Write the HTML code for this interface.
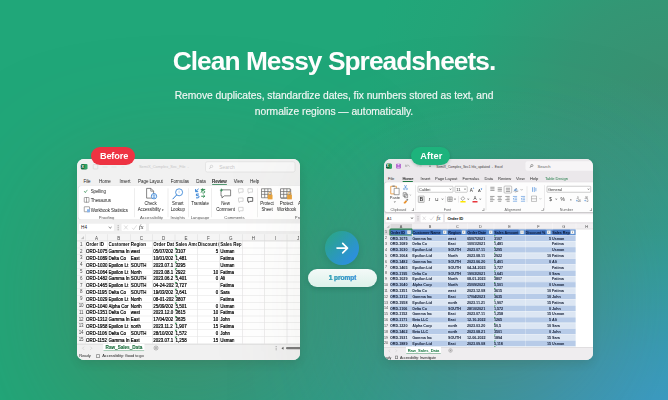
<!DOCTYPE html>
<html><head><meta charset="utf-8"><title>Clean Messy Spreadsheets</title>
<style>
html,body{margin:0;padding:0;}
body{width:668px;height:400px;overflow:hidden;font-family:"Liberation Sans",sans-serif;background:#20a779;}
#stage{position:relative;width:668px;height:400px;overflow:hidden;
  background:
    radial-gradient(ellipse 560px 340px at 100% 104%, rgba(58,156,200,1) 0%, rgba(58,155,194,.86) 20%, rgba(57,152,170,.45) 55%, rgba(54,148,120,0) 100%),
    radial-gradient(ellipse 300px 260px at 100% 22%, rgba(58,144,114,1) 0%, rgba(56,146,115,.8) 35%, rgba(45,156,118,.35) 70%, rgba(32,167,121,0) 100%),
    #20a779;
}
#stage *{box-sizing:border-box;}
h1{will-change:transform;position:absolute;left:0;top:44.9px;width:668px;margin:0;text-align:center;color:#fff;font-weight:700;font-size:26.3px;line-height:32px;letter-spacing:-0.95px;white-space:nowrap;}
.sub{will-change:transform;position:absolute;left:0;width:668px;text-align:center;color:#fff;-webkit-text-stroke:.18px rgba(255,255,255,.85);font-size:10.3px;line-height:16px;letter-spacing:-0.035px;white-space:nowrap;opacity:.97}
.card{position:absolute;background:#fff;border-radius:7px;overflow:hidden;box-shadow:0 40px 140px 10px rgba(110,105,85,.4),0 4px 10px rgba(40,80,60,.2);}
#before{left:76.5px;top:159.3px;width:223.5px;height:200.6px;}
#after{left:383.6px;top:159.3px;width:209.3px;height:200.6px;}
.badge{will-change:transform;position:absolute;height:18px;border-radius:9px;color:#fff;font-weight:700;font-size:9.2px;line-height:18px;text-align:center;letter-spacing:-0.15px;}
#bb{left:91.2px;top:147px;width:44px;background:#ee3342;padding-left:2px;}
#ab{left:411.4px;top:147px;width:38.6px;background:#1db37c;padding-left:2.2px;letter-spacing:.18px;box-shadow:0 1px 3px rgba(0,60,40,.25);}
#arrow{position:absolute;left:325.3px;top:231px;width:34px;height:34px;border-radius:50%;background:linear-gradient(135deg,#2aa58a 10%,#2c8fe0 85%);box-shadow:0 2px 6px rgba(0,50,60,.16);}
#pill{will-change:transform;position:absolute;left:308px;top:269px;width:69px;height:18.2px;border-radius:9.1px;background:linear-gradient(180deg,rgba(255,255,255,.95),rgba(230,245,240,.95));box-shadow:0 2px 5px rgba(0,50,40,.22);text-align:center;line-height:18px;font-size:6.5px;font-weight:700;letter-spacing:-0.02px;}
#pill span{-webkit-text-stroke:.22px #3096c2;background:linear-gradient(90deg,#27a0a6,#3a8ee0);-webkit-background-clip:text;background-clip:text;color:transparent;}
.sc{position:absolute;left:0;top:0;width:400%;height:400%;transform:scale(.25);transform-origin:0 0;}
/* excel common */
.card span,.card i{position:absolute;display:block;white-space:nowrap;font-style:normal;}
.grid{position:absolute;left:0;top:0;width:100%;height:100%;}
.vl{width:2px;background:#dcdcdc;}
.hl{left:0;width:100%;height:2px;background:#e2e2e2;}
.tri{width:0;height:0;border-top:8.4px solid #1e8e3e;border-right:8.4px solid transparent;}
/* before text */
#bgrid .c{transform:scaleX(.86);transform-origin:0 50%;font-size:20.8px;line-height:27.2px;height:27.2px;color:#000;font-weight:400;overflow:hidden;letter-spacing:0px;-webkit-text-stroke:0.88px #000;}
#bgrid .c.h{font-weight:700;-webkit-text-stroke:0;}
#bgrid .c.r{text-align:right;transform-origin:100% 50%;}
#bgrid .rn{left:0;width:32.8px;text-align:center;font-size:18px;line-height:27.2px;color:#4a4a4a;letter-spacing:-0.6px;}
#bgrid .ch{width:80px;text-align:center;font-size:18px;line-height:24px;color:#4a4a4a;}
/* after text */
#agrid .c{transform:scaleX(.93);transform-origin:0 50%;font-size:16px;line-height:23.36px;height:23.36px;color:#0d1830;font-weight:700;overflow:hidden;letter-spacing:-0.2px;}
#agrid .c.r{text-align:right;transform-origin:100% 50%;}
#agrid .c.h{color:#081633;font-weight:700;-webkit-text-stroke:0;}
#agrid .rn{left:-4px;width:24px;text-align:center;font-size:14.4px;line-height:23.36px;color:#444;}
#agrid .ch{width:80px;text-align:center;font-size:15.2px;line-height:21.6px;color:#444;}
#agrid .band{display:block;}
#agrid .fb{width:14px;height:14.4px;background:#fff;border:1.6px solid #9ab;}
#agrid .vl{background:rgba(255,255,255,.55);}
#agrid .hl{background:rgba(255,255,255,.55);}
.t{font-size:20px;line-height:24px;color:#222;}
.abs{position:absolute;width:0;height:0;}
.tb{font-size:18px;line-height:24px;color:#222;letter-spacing:-0.2px;}
.rb{font-size:17.84px;line-height:24px;color:#222;letter-spacing:-0.4px;}
.rb.c2{text-align:center;}
.rl{font-size:16.8px;line-height:24px;color:#555;text-align:center;}
.sep{top:754px;width:2px;height:116px;background:#dcdcdc;}
.ic{position:absolute;display:block;overflow:visible;}
.ta{top:700.8px;font-size:16.4px;line-height:24px;color:#2b2b2b;letter-spacing:-0.28px;}
.ra{font-size:16px;line-height:24px;color:#333;}
.la{font-size:14.8px;line-height:24px;color:#666;text-align:center;}
.sa{top:742.4px;width:2px;height:100px;background:#d8d6d8;}
.dl{top:834.4px;width:8.8px;height:8.8px;border-right:2px solid #666;border-bottom:2px solid #666;}
.cv{width:6px;height:6px;border-right:2px solid #555;border-bottom:2px solid #555;transform:rotate(45deg);}
#agrid .hp{display:inline;font-weight:700;background:rgba(40,78,160,.42);padding:2.4px 1.2px;}
#agrid .fa{left:3px;top:4.2px;width:0;height:0;border-top:4.4px solid #444;border-left:3.6px solid transparent;border-right:3.6px solid transparent;}
#agrid .tri{border-top-width:6.4px;border-right-width:6.4px;}

</style></head>
<body>
<div id="stage">
<h1>Clean Messy Spreadsheets.</h1>
<div class="sub" style="top:87.5px">Remove duplicates, standardize dates, fix numbers stored as text, and</div>
<div class="sub" style="top:103.9px">normalize regions — automatically.</div>
<div class="card" id="before"><div class="sc">
<div class="abs" style="left:-306px;top:-637.2px">
<!-- title bar + tab row background -->
<i style="left:306px;top:637.2px;width:896px;height:248px;background:#f1f1f1"></i>
<!-- excel icon -->
<i style="left:322.4px;top:656.8px;width:23.2px;height:22.4px;background:#1e7a45;border-radius:4px"></i>
<i style="left:333.6px;top:658.4px;width:14.4px;height:19.2px;background:#2fa566;border-radius:2.4px"></i>
<i style="left:321.2px;top:661.2px;width:15.2px;height:14.4px;background:#155f34;border-radius:2px"></i>
<span style="left:323.6px;top:660.4px;font-size:14.4px;line-height:16px;color:#fff;font-weight:700">X</span>
<!-- qat icons faint -->
<i style="left:370.4px;top:658.4px;width:20px;height:20px;border:2.4px solid #cfcfcf;border-radius:3.2px"></i>
<i style="left:408px;top:668px;width:20px;height:2.4px;background:#d6d6d6"></i>
<i style="left:444px;top:668px;width:20px;height:2.4px;background:#dcdcdc"></i>
<i style="left:484px;top:668px;width:12px;height:2.4px;background:#dcdcdc"></i>
<span style="left:554px;top:657.2px;font-size:16px;line-height:24px;color:#c6c6c6;letter-spacing:-0.2px">SemiX_Complex_Sec_File &nbsp;-</span>
<!-- search box -->
<i style="left:818.8px;top:646.8px;width:360px;height:43.2px;background:#f8f8f8;border:2.4px solid #d6d6d6;border-radius:8px"></i>
<i style="left:838.4px;top:660.8px;width:11.2px;height:11.2px;border:2px solid #bdbdbd;border-radius:50%"></i>
<i style="left:834px;top:672px;width:8px;height:2px;background:#bdbdbd;transform:rotate(-45deg)"></i>
<span style="left:875.2px;top:656.8px;font-size:19.6px;line-height:24px;color:#c8c8c8">Search</span>
<!-- tabs -->
<span class="tb" style="left:332px;top:713.2px">File</span>
<span class="tb" style="left:394px;top:713.2px">Home</span>
<span class="tb" style="left:476px;top:713.2px">Insert</span>
<span class="tb" style="left:550.4px;top:713.2px">Page Layout</span>
<span class="tb" style="left:680.8px;top:713.2px">Formulas</span>
<span class="tb" style="left:783.2px;top:713.2px">Data</span>
<span class="tb" style="left:846.4px;top:713.2px;font-weight:700;letter-spacing:-0.6px">Review</span>
<span class="tb" style="left:932.8px;top:713.2px">View</span>
<span class="tb" style="left:998.4px;top:713.2px">Help</span>
<i style="left:846.4px;top:736.8px;width:60px;height:3.6px;background:#1e7a45;border-radius:1.6px"></i>
<!-- ribbon body -->
<i style="left:312px;top:745.6px;width:904px;height:133.6px;background:#fff;border-radius:12px;box-shadow:0 2px 4px rgba(0,0,0,.12)"></i>
<!-- Proofing -->
<i style="left:337.2px;top:756.8px;width:8px;height:13.6px;border-right:2.8px solid #2b8a4e;border-bottom:2.8px solid #2b8a4e;transform:rotate(40deg)"></i>
<span class="rb" style="left:360.8px;top:754px">Spelling</span>
<i style="left:334.4px;top:790.4px;width:20.8px;height:20.8px;border:2.4px solid #555;border-radius:2px"></i>
<i style="left:344px;top:790.4px;width:2.4px;height:20.8px;background:#555"></i>
<span class="rb" style="left:360.8px;top:792px">Thesaurus</span>
<i style="left:334.4px;top:827.2px;width:22.4px;height:21.6px;border:2.4px solid #555;border-radius:2px"></i>
<i style="left:346.4px;top:838.4px;width:12px;height:12px;background:#8ab4e8"></i>
<span class="rb" style="left:360.8px;top:829.6px">Workbook Statistics</span>
<span class="rl" style="left:364px;width:120px;top:858.4px">Proofing</span>
<i class="sep" style="left:534.4px"></i>
<!-- Check accessibility -->
<svg class="ic" style="left:578px;top:751.2px" width="48" height="52" viewBox="0 0 12 13"><path d="M1.6 .9h4.3l2.7 2.7v7H1.6z" fill="#fff" stroke="#555" stroke-width=".7"/><path d="M5.8 .9v2.8h2.8" fill="none" stroke="#555" stroke-width=".6"/><circle cx="9" cy="8.7" r="2.7" fill="#fff" stroke="#2b7cd3" stroke-width=".8"/><circle cx="9" cy="7.3" r=".55" fill="#2b7cd3"/><path d="M7.5 8.3h3M9 8.3v1.2l-.9 1.3M9 9.5l.9 1.3" stroke="#2b7cd3" stroke-width=".6" fill="none"/></svg>
<span class="rb c2" style="left:536px;width:128px;top:801.2px">Check</span>
<span class="rb c2" style="left:536px;width:128px;top:825.2px">Accessibility <b style="font-size:12px">▾</b></span>
<span class="rl" style="left:540px;width:128px;top:858.4px">Accessibility</span>
<i class="sep" style="left:668.8px"></i>
<!-- Smart lookup -->
<svg class="ic" style="left:684px;top:751.2px" width="52" height="52" viewBox="0 0 13 13"><circle cx="7.6" cy="4.8" r="3.5" fill="#fff" stroke="#2b7cd3" stroke-width=".8"/><path d="M5 7.6L1.4 11.4" stroke="#2b7cd3" stroke-width="1" stroke-linecap="round"/><path d="M7.6 3.2v2.6" stroke="#9cc3ee" stroke-width=".7"/></svg>
<span class="rb c2" style="left:668px;width:82px;top:801.2px">Smart</span>
<span class="rb c2" style="left:668px;width:82px;top:825.2px">Lookup</span>
<span class="rl" style="left:668px;width:82px;top:858.4px">Insights</span>
<i class="sep" style="left:750.4px"></i>
<!-- Translate -->
<svg class="ic" style="left:777.6px;top:754.4px" width="44" height="41.6" viewBox="0 0 11 10.4"><g fill="none" stroke="#2b7cd3" stroke-width=".95"><path d="M.6 .8v2.6h2.6M.8 3.2L3.6 .6"/><path d="M3.9 5.8H1.4v1.6h1.7c1.2 0 1.2 2.2 0 2.2H1"/></g><g fill="none" stroke="#2b8a4e" stroke-width=".95"><path d="M5.8 1.2h4.4M7.6 .2c-.3 2.2-.6 3.2-1.6 4.2M6.4 2.6c1.8-.6 3.6 0 3.4 1.2-.2 1-1.400 1.200-2.400.800"/><path d="M6.200 8h3.600M8.400 6.600L9.800 8 8.400 9.400"/></g></svg>
<span class="rb c2" style="left:752px;width:92px;top:801.2px">Translate</span>
<span class="rl" style="left:752px;width:92px;top:858.4px">Language</span>
<i class="sep" style="left:843.2px"></i>
<!-- New comment -->
<svg class="ic" style="left:874.4px;top:754.4px" width="52" height="44" viewBox="0 0 13 11"><path d="M2 1.6h9.6v6H5.2L3 9.8V7.6H2z" fill="#fff" stroke="#555" stroke-width=".7"/><path d="M2.4 .4v3M.9 1.9h3" stroke="#2b8a4e" stroke-width=".8"/></svg>
<span class="rb c2" style="left:848px;width:104px;top:801.2px">New</span>
<span class="rb c2" style="left:848px;width:104px;top:825.2px">Comment</span>
<svg class="ic" style="left:948px;top:752px" width="72" height="104" viewBox="0 0 18 26"><g fill="#fff" stroke="#bdbdbd" stroke-width=".6"><path d="M1 1h4.6v3.4H3L1.8 5.6V4.4H1z"/><path d="M10.4 1H15v3.4h-2.6l-1.2 1.2V4.4h-.8z"/><path d="M1 10.2h4.6v3.4H3l-1.2 1.2v-1.2H1z"/><path d="M1 19.6h4.6V23H3l-1.2 1.2V23H1z"/></g><path d="M10.2 9.8h5v3.8h-2.8l-1.3 1.3v-1.3h-.9z" fill="#fff" stroke="#444" stroke-width=".8"/></svg>
<span class="rl" style="left:848px;width:176px;top:858.4px">Comments</span>
<i class="sep" style="left:1026.4px"></i>
<!-- Protect sheet / workbook -->
<svg class="ic" style="left:1040px;top:752px" width="52" height="52" viewBox="0 0 13 13"><path d="M1 1h9.6v9H1zM1 3.8h9.6M1 6.6h9.6M4.2 1v9M7.4 1v9" fill="#fff" stroke="#666" stroke-width=".7"/><rect x="7.2" y="7" width="4.8" height="4.6" fill="#e8a33d"/><path d="M8.2 7V5.8a1.4 1.4 0 012.8 0V7" fill="none" stroke="#e8a33d" stroke-width=".8"/></svg>
<svg class="ic" style="left:1116px;top:752px" width="56" height="52" viewBox="0 0 14 13"><path d="M1.6 1.6h9.6v9H1.6z" fill="#fff" stroke="#666" stroke-width=".7"/><path d="M1 1h9.6v9H1zM1 3.8h9.6M1 6.6h9.6M4.2 1v9M7.4 1v9" fill="#fff" stroke="#666" stroke-width=".7"/><rect x="7.6" y="7" width="4.8" height="4.6" fill="#e8a33d"/><path d="M8.6 7V5.8a1.4 1.4 0 012.8 0V7" fill="none" stroke="#e8a33d" stroke-width=".8"/></svg>
<span class="rb c2" style="left:1028px;width:76px;top:801.2px">Protect</span>
<span class="rb c2" style="left:1028px;width:76px;top:825.2px">Sheet</span>
<span class="rb c2" style="left:1096px;width:96px;top:801.2px">Protect</span>
<span class="rb c2" style="left:1096px;width:96px;top:825.2px">Workbook</span>
<span class="rb" style="left:1190.4px;top:801.2px">A</span>
<span class="rl" style="left:1144px;width:120px;top:858.4px">Protect</span>
<!-- formula bar -->
<i style="left:306px;top:879.6px;width:896px;height:85.6px;background:#efefef"></i>
<i style="left:314px;top:895.6px;width:140px;height:29.6px;background:#fff;border-radius:4px"></i>
<span class="t" style="left:322.4px;top:898.8px;font-size:18.4px">H4</span>
<i style="left:433.6px;top:903.2px;width:9.6px;height:9.6px;border-right:2.4px solid #555;border-bottom:2.4px solid #555;transform:rotate(45deg)"></i>
<i style="left:468.8px;top:902.4px;width:2.8px;height:3.6px;background:#777;box-shadow:0 8px 0 #777,0 16px 0 #777"></i>
<i style="left:484px;top:895.6px;width:98.4px;height:29.6px;background:#fff;border-radius:4px"></i>
<svg class="ic" style="left:488px;top:897.6px" width="96" height="28" viewBox="0 0 24 7"><path d="M1.6 1.4l3.6 4M5.2 1.4l-3.6 4M9.6 3.8l1.5 1.7 3.1-4.2" stroke="#c8c8c8" stroke-width=".6" fill="none"/><text x="16.6" y="5.4" font-family="Liberation Serif" font-style="italic" font-size="6" fill="#333">fx</text></svg>
<i style="left:594px;top:895.6px;width:640px;height:29.6px;background:#fff;border-radius:4px"></i>
<!-- column header strip -->
<i style="left:306px;top:937.2px;width:896px;height:27.6px;background:#f5f5f5;border-bottom:2px solid #d8d8d8"></i>
<i style="left:306px;top:964.8px;width:32.8px;height:440px;background:#f5f5f5"></i>
<i style="left:320.8px;top:945.6px;width:0;height:0;border-bottom:13.6px solid #c4c4c4;border-left:13.6px solid transparent"></i>
</div>
<div class="grid" id="bgrid">
<span class="ch" style="left:37.6px;top:303.6px">A</span><span class="ch" style="left:127.2px;top:303.6px">B</span><span class="ch" style="left:217px;top:303.6px">C</span><span class="ch" style="left:306.6px;top:303.6px">D</span><span class="ch" style="left:396px;top:303.6px">E</span><span class="ch" style="left:485.4px;top:303.6px">F</span><span class="ch" style="left:575px;top:303.6px">G</span><span class="ch" style="left:665px;top:303.6px">H</span><span class="ch" style="left:754.6px;top:303.6px">I</span><span class="ch" style="left:844px;top:303.6px">J</span><i class="vl" style="left:32.8px;top:300.8px;height:442px"></i><i class="vl" style="left:122.4px;top:300.8px;height:442px"></i><i class="vl" style="left:212px;top:300.8px;height:442px"></i><i class="vl" style="left:302px;top:300.8px;height:442px"></i><i class="vl" style="left:391.2px;top:300.8px;height:442px"></i><i class="vl" style="left:480.8px;top:300.8px;height:442px"></i><i class="vl" style="left:570px;top:300.8px;height:442px"></i><i class="vl" style="left:660px;top:300.8px;height:442px"></i><i class="vl" style="left:750px;top:300.8px;height:442px"></i><i class="vl" style="left:839.2px;top:300.8px;height:442px"></i><i class="vl" style="left:928.8px;top:300.8px;height:442px"></i><i class="hl" style="top:327.6px"></i><i class="hl" style="top:354.84px"></i><i class="hl" style="top:382.08px"></i><i class="hl" style="top:409.32px"></i><i class="hl" style="top:436.56px"></i><i class="hl" style="top:463.8px"></i><i class="hl" style="top:491.04px"></i><i class="hl" style="top:518.28px"></i><i class="hl" style="top:545.52px"></i><i class="hl" style="top:572.76px"></i><i class="hl" style="top:600px"></i><i class="hl" style="top:627.24px"></i><i class="hl" style="top:654.48px"></i><i class="hl" style="top:681.72px"></i><i class="hl" style="top:708.96px"></i><i class="hl" style="top:736.2px"></i><i class="hl" style="top:763.44px"></i><span class="rn" style="top:327.6px">1</span><span class="c h" style="left:36px;top:327.6px;width:99.52px;">Order ID</span><span class="c h" style="left:125.6px;top:327.6px;width:99.52px;">Customer</span><span class="c h" style="left:215.2px;top:327.6px;width:100px;">Region</span><span class="c h" style="left:305.2px;top:327.6px;width:99.08px;">Order Dat</span><span class="c h" style="left:394.4px;top:327.6px;width:99.52px;">Sales Amo</span><span class="c h" style="left:484px;top:327.6px;width:99.08px;">Discount (%</span><span class="c h" style="left:573.2px;top:327.6px;">Sales Rep</span><span class="rn" style="top:354.84px">2</span><span class="c" style="left:36px;top:354.84px;width:99.52px;">ORD-1075</span><span class="c" style="left:125.6px;top:354.84px;width:99.52px;">Gamma In</span><span class="c" style="left:215.2px;top:354.84px;">west</span><span class="c" style="left:305.2px;top:354.84px;width:99.08px;">05/07/202</span><i class="tri" style="left:393.2px;top:355.64px"></i><span class="c" style="left:394.4px;top:354.84px;width:99.52px;">3107</span><span class="c r" style="left:467.08px;width:98.12px;top:354.84px;">5</span><span class="c" style="left:573.2px;top:354.84px;">Usman</span><span class="rn" style="top:382.08px">3</span><span class="c" style="left:36px;top:382.08px;width:99.52px;">ORD-1089</span><span class="c" style="left:125.6px;top:382.08px;width:99.52px;">Delta Co</span><span class="c" style="left:215.2px;top:382.08px;">East</span><span class="c" style="left:305.2px;top:382.08px;width:99.08px;">10/01/202</span><i class="tri" style="left:393.2px;top:382.88px"></i><span class="c" style="left:394.4px;top:382.08px;width:99.52px;">1,481</span><span class="c" style="left:573.2px;top:382.08px;">Fatima</span><span class="rn" style="top:409.32px">4</span><span class="c" style="left:36px;top:409.32px;width:99.52px;">ORD-1030</span><span class="c" style="left:125.6px;top:409.32px;width:99.52px;">Epsilon Lt</span><span class="c" style="left:215.2px;top:409.32px;">SOUTH</span><span class="c" style="left:305.2px;top:409.32px;width:99.08px;">2023.07.1</span><i class="tri" style="left:393.2px;top:410.12px"></i><span class="c" style="left:394.4px;top:409.32px;width:99.52px;">3295</span><span class="c" style="left:573.2px;top:409.32px;">Usman</span><span class="rn" style="top:436.56px">5</span><span class="c" style="left:36px;top:436.56px;width:99.52px;">ORD-1064</span><span class="c" style="left:125.6px;top:436.56px;width:99.52px;">Epsilon Lt</span><span class="c" style="left:215.2px;top:436.56px;">North</span><span class="c" style="left:305.2px;top:436.56px;width:99.08px;">2023.08.1</span><i class="tri" style="left:393.2px;top:437.36px"></i><span class="c" style="left:394.4px;top:436.56px;width:99.52px;">2922</span><span class="c r" style="left:467.08px;width:98.12px;top:436.56px;">10</span><span class="c" style="left:573.2px;top:436.56px;">Fatima</span><span class="rn" style="top:463.8px">6</span><span class="c" style="left:36px;top:463.8px;width:99.52px;">ORD-1482</span><span class="c" style="left:125.6px;top:463.8px;width:99.52px;">Gamma In</span><span class="c" style="left:215.2px;top:463.8px;">SOUTH</span><span class="c" style="left:305.2px;top:463.8px;width:99.08px;">2023.06.2</span><i class="tri" style="left:393.2px;top:464.6px"></i><span class="c" style="left:394.4px;top:463.8px;width:99.52px;">5,401</span><span class="c r" style="left:467.08px;width:98.12px;top:463.8px;">0</span><span class="c" style="left:573.2px;top:463.8px;">Ali</span><span class="rn" style="top:491.04px">7</span><span class="c" style="left:36px;top:491.04px;width:99.52px;">ORD-1465</span><span class="c" style="left:125.6px;top:491.04px;width:99.52px;">Epsilon Lt</span><span class="c" style="left:215.2px;top:491.04px;">SOUTH</span><span class="c" style="left:305.2px;top:491.04px;width:99.08px;">04-24-202</span><i class="tri" style="left:393.2px;top:491.84px"></i><span class="c" style="left:394.4px;top:491.04px;width:99.52px;">3,727</span><span class="c" style="left:573.2px;top:491.04px;">Fatima</span><span class="rn" style="top:518.28px">8</span><span class="c" style="left:36px;top:518.28px;width:99.52px;">ORD-1195</span><span class="c" style="left:125.6px;top:518.28px;width:99.52px;">Delta Co</span><span class="c" style="left:215.2px;top:518.28px;">SOUTH</span><span class="c" style="left:305.2px;top:518.28px;width:99.08px;">19/03/202</span><i class="tri" style="left:393.2px;top:519.08px"></i><span class="c" style="left:394.4px;top:518.28px;width:99.52px;">3,641</span><span class="c r" style="left:467.08px;width:98.12px;top:518.28px;">0</span><span class="c" style="left:573.2px;top:518.28px;">Sara</span><span class="rn" style="top:545.52px">9</span><span class="c" style="left:36px;top:545.52px;width:99.52px;">ORD-1029</span><span class="c" style="left:125.6px;top:545.52px;width:99.52px;">Epsilon Lt</span><span class="c" style="left:215.2px;top:545.52px;">North</span><span class="c" style="left:305.2px;top:545.52px;width:99.08px;">08-01-202</span><i class="tri" style="left:393.2px;top:546.32px"></i><span class="c" style="left:394.4px;top:545.52px;width:99.52px;">3807</span><span class="c" style="left:573.2px;top:545.52px;">Fatima</span><span class="rn" style="top:572.76px">10</span><span class="c" style="left:36px;top:572.76px;width:99.52px;">ORD-1040</span><span class="c" style="left:125.6px;top:572.76px;width:99.52px;">Alpha Cor</span><span class="c" style="left:215.2px;top:572.76px;">North</span><span class="c" style="left:305.2px;top:572.76px;width:99.08px;">25/09/202</span><i class="tri" style="left:393.2px;top:573.56px"></i><span class="c" style="left:394.4px;top:572.76px;width:99.52px;">5,501</span><span class="c r" style="left:467.08px;width:98.12px;top:572.76px;">0</span><span class="c" style="left:573.2px;top:572.76px;">Usman</span><span class="rn" style="top:600px">11</span><span class="c" style="left:36px;top:600px;width:99.52px;">ORD-1351</span><span class="c" style="left:125.6px;top:600px;width:99.52px;">Delta Co</span><span class="c" style="left:215.2px;top:600px;">west</span><span class="c" style="left:305.2px;top:600px;width:99.08px;">2023.12.0</span><i class="tri" style="left:393.2px;top:600.8px"></i><span class="c" style="left:394.4px;top:600px;width:99.52px;">3615</span><span class="c r" style="left:467.08px;width:98.12px;top:600px;">10</span><span class="c" style="left:573.2px;top:600px;">Fatima</span><span class="rn" style="top:627.24px">12</span><span class="c" style="left:36px;top:627.24px;width:99.52px;">ORD-1312</span><span class="c" style="left:125.6px;top:627.24px;width:99.52px;">Gamma In</span><span class="c" style="left:215.2px;top:627.24px;">East</span><span class="c" style="left:305.2px;top:627.24px;width:99.08px;">17/04/202</span><i class="tri" style="left:393.2px;top:628.04px"></i><span class="c" style="left:394.4px;top:627.24px;width:99.52px;">3635</span><span class="c r" style="left:467.08px;width:98.12px;top:627.24px;">10</span><span class="c" style="left:573.2px;top:627.24px;">John</span><span class="rn" style="top:654.48px">13</span><span class="c" style="left:36px;top:654.48px;width:99.52px;">ORD-1958</span><span class="c" style="left:125.6px;top:654.48px;width:99.52px;">Epsilon Lt</span><span class="c" style="left:215.2px;top:654.48px;">north</span><span class="c" style="left:305.2px;top:654.48px;width:99.08px;">2023.11.2</span><i class="tri" style="left:393.2px;top:655.28px"></i><span class="c" style="left:394.4px;top:654.48px;width:99.52px;">1,907</span><span class="c r" style="left:467.08px;width:98.12px;top:654.48px;">15</span><span class="c" style="left:573.2px;top:654.48px;">Fatima</span><span class="rn" style="top:681.72px">14</span><span class="c" style="left:36px;top:681.72px;width:99.52px;">ORD-1106</span><span class="c" style="left:125.6px;top:681.72px;width:99.52px;">Delta Co</span><span class="c" style="left:215.2px;top:681.72px;">SOUTH</span><span class="c" style="left:305.2px;top:681.72px;width:99.08px;">28/10/202</span><i class="tri" style="left:393.2px;top:682.52px"></i><span class="c" style="left:394.4px;top:681.72px;width:99.52px;">1,572</span><span class="c r" style="left:467.08px;width:98.12px;top:681.72px;">0</span><span class="c" style="left:573.2px;top:681.72px;">John</span><span class="rn" style="top:708.96px">15</span><span class="c" style="left:36px;top:708.96px;width:99.52px;">ORD-1152</span><span class="c" style="left:125.6px;top:708.96px;width:99.52px;">Gamma In</span><span class="c" style="left:215.2px;top:708.96px;">East</span><span class="c" style="left:305.2px;top:708.96px;width:99.08px;">2023.07.1</span><i class="tri" style="left:393.2px;top:709.76px"></i><span class="c" style="left:394.4px;top:708.96px;width:99.52px;">1,258</span><span class="c r" style="left:467.08px;width:98.12px;top:708.96px;">15</span><span class="c" style="left:573.2px;top:708.96px;">Usman</span></div>
<div class="abs" style="left:-306px;top:-637.2px">
<i style="left:306px;top:1376.8px;width:896px;height:64px;background:#f1f1f1"></i>
<i style="left:306px;top:1376.8px;width:896px;height:2px;background:#d4d4d4"></i>
<svg class="ic" style="left:324px;top:1384.8px" width="48" height="17.6" viewBox="0 0 12 4.4"><path d="M2.6 .6L1 2.2l1.6 1.6M8.8 .6l1.6 1.6-1.6 1.6" stroke="#c9c9c9" stroke-width=".6" fill="none"/></svg>
<i style="left:410.8px;top:1377.6px;width:165.6px;height:28.8px;background:#fff;border-bottom:3.2px solid #1e7a45;border-radius:0 0 4px 4px"></i>
<span style="left:410.8px;width:165.6px;text-align:center;top:1380px;font-size:18.8px;line-height:24px;color:#176b3a;font-weight:700;letter-spacing:-0.2px;-webkit-text-stroke:0.32px #176b3a">Raw_Sales_Data</span>
<i style="left:613.2px;top:1384.4px;width:17.6px;height:17.6px;border:2px solid #777;border-radius:50%"></i>
<i style="left:617.6px;top:1392.2px;width:8.8px;height:2px;background:#777"></i>
<i style="left:621px;top:1388.8px;width:2px;height:8.8px;background:#777"></i>
<i style="left:1100.8px;top:1386.4px;width:2.8px;height:3.2px;background:#666;box-shadow:0 6.4px 0 #666,0 12.8px 0 #666"></i>
<i style="left:1124px;top:1388px;width:0;height:0;border-right:8px solid #555;border-top:6px solid transparent;border-bottom:6px solid transparent"></i>
<i style="left:1142.4px;top:1389.6px;width:80px;height:8.8px;background:#7a7a7a;border-radius:4.4px"></i>
<span style="left:315.2px;top:1413.6px;font-size:16px;line-height:24px;color:#222;letter-spacing:-0.12px">Ready</span>
<i style="left:383.2px;top:1418.4px;width:13.6px;height:14.4px;border:2px solid #555;border-radius:1.6px"></i>
<span style="left:407.2px;top:1413.6px;font-size:16px;line-height:24px;color:#222;letter-spacing:-0.4px">Accessibility: Good to go</span>
</div>
</div></div>
<div class="card" id="after"><div class="sc">
<div class="abs" style="left:-1534.4px;top:-637.2px">
<i style="left:1534.4px;top:637.2px;width:840px;height:281.6px;background:#ebe8eb"></i>
<!-- excel icon -->
<i style="left:1543.2px;top:655.6px;width:20.8px;height:20.8px;background:#1e7a45;border-radius:4px"></i>
<i style="left:1553.6px;top:657.2px;width:12.8px;height:17.6px;background:#2fa566;border-radius:2.4px"></i>
<i style="left:1542px;top:659.6px;width:14px;height:13.2px;background:#155f34;border-radius:2px"></i>
<span style="left:1544px;top:658.4px;font-size:13.2px;line-height:16px;color:#fff;font-weight:700">X</span>
<!-- save icon purple -->
<i style="left:1583.2px;top:656.4px;width:18.4px;height:19.2px;background:#a64ac9;border-radius:2.8px"></i>
<i style="left:1588px;top:656.4px;width:8.8px;height:6.4px;background:#e9d3f3"></i>
<i style="left:1587.2px;top:667.6px;width:10.4px;height:8px;background:#d9b2ea"></i>
<svg class="ic" style="left:1617.6px;top:657.6px" width="24" height="18.4" viewBox="0 0 6 4.6"><path d="M.8 2.2C2 .6 4.4.6 5 2.8M.8 .6v1.8h1.8" fill="none" stroke="#9a9a9a" stroke-width=".55"/></svg>
<svg class="ic" style="left:1662px;top:657.6px" width="24" height="18.4" viewBox="0 0 6 4.6"><path d="M5.2 2.2C4 .6 1.6.6 1 2.8M5.2 .6v1.8H3.4" fill="none" stroke="#d2d0d2" stroke-width=".55"/></svg>
<i style="left:1716px;top:663.6px;width:4.8px;height:4.8px;border-radius:50%;background:#333"></i>
<span style="left:1743.2px;top:654.4px;font-size:16.2px;line-height:24px;color:#3a3a3a;letter-spacing:-0.08px;transform:scaleX(.83);transform-origin:0 50%">SemiX_Complex_Sec1 hfo_updated &nbsp;-&nbsp; Excel</span>
<!-- search -->
<i style="left:2100.8px;top:646px;width:272px;height:38.4px;background:#f7f5f7;border-radius:8px 0 0 8px"></i>
<i style="left:2120.8px;top:658px;width:10.4px;height:10.4px;border:2px solid #555;border-radius:50%"></i>
<i style="left:2116.8px;top:668.4px;width:7.6px;height:2px;background:#555;transform:rotate(-45deg)"></i>
<span style="left:2148.8px;top:654px;font-size:16.4px;line-height:24px;color:#666">Search</span>
<!-- tabs -->
<span class="ta" style="left:1550.4px">File</span>
<span class="ta" style="left:1608px;font-weight:700;letter-spacing:-0.48px">Home</span>
<span class="ta" style="left:1680.8px">Insert</span>
<span class="ta" style="left:1738.4px">Page Layout</span>
<span class="ta" style="left:1848.8px">Formulas</span>
<span class="ta" style="left:1936.8px">Data</span>
<span class="ta" style="left:1990.4px">Review</span>
<span class="ta" style="left:2062.4px">View</span>
<span class="ta" style="left:2118.4px">Help</span>
<span class="ta" style="left:2178.4px;color:#1e7a45">Table Design</span>
<i style="left:1608px;top:725.6px;width:42.4px;height:3.2px;background:#1e7a45;border-radius:1.6px"></i>
<!-- ribbon body -->
<i style="left:1537.2px;top:730.4px;width:852px;height:118.4px;background:#fdfdfd;border-radius:10px;box-shadow:0 2px 4px rgba(0,0,0,.14)"></i>
<!-- clipboard -->
<svg class="ic" style="left:1557.6px;top:739.2px" width="42" height="44" viewBox="0 0 10.5 11"><path d="M1 1.8h5.6v7.6H1z" fill="#fff" stroke="#e8912d" stroke-width=".8"/><path d="M2.6 1h2.4v1.4H2.6z" fill="#888"/><path d="M4.4 3.8h5v6.4h-5z" fill="#fff" stroke="#666" stroke-width=".6"/></svg>
<span class="ra" style="left:1552px;width:52px;text-align:center;top:778.4px">Paste</span>
<i style="left:1574.4px;top:804px;width:6.4px;height:6.4px;border-right:2px solid #555;border-bottom:2px solid #555;transform:rotate(45deg)"></i>
<svg class="ic" style="left:1606.4px;top:739.2px" width="28" height="80" viewBox="0 0 7 20"><path d="M2.4 .6l1.6 3M4.6 .6L3 3.6" stroke="#3b83d6" stroke-width=".6"/><circle cx="2.2" cy="4.4" r=".8" fill="none" stroke="#3b83d6" stroke-width=".5"/><circle cx="4.8" cy="4.4" r=".8" fill="none" stroke="#3b83d6" stroke-width=".5"/><path d="M1.2 8.2h3v3.6h-3zM2.6 9.6h3v3.6h-3z" fill="#fff" stroke="#555" stroke-width=".55"/><path d="M1.4 18.4l2.4-2.6 1.4 1.2-2.2 2.2z" fill="#e8912d"/><path d="M4 15.6l1.4-1.4 1 1-1.4 1.4z" fill="#777"/></svg>
<i style="left:1637.6px;top:777.6px;width:5.2px;height:5.2px;border-right:1.8px solid #555;border-bottom:1.8px solid #555;transform:rotate(45deg)"></i>
<span class="la" style="left:1552px;width:80px;top:826.4px">Clipboard</span>
<i class="dl" style="left:1645.6px"></i>
<i class="sa" style="left:1660.8px"></i>
<!-- font -->
<i style="left:1669.6px;top:745.6px;width:141.6px;height:25.6px;background:#fff;border:2px solid #9a9a9a;border-radius:3.2px"></i>
<span class="ra" style="left:1674.4px;top:746.4px">Calibri</span>
<i class="cv" style="left:1797.6px;top:752.8px"></i>
<i style="left:1817.6px;top:745.6px;width:51.2px;height:25.6px;background:#fff;border:2px solid #9a9a9a;border-radius:3.2px"></i>
<span class="ra" style="left:1823.2px;top:746.4px">11</span>
<i class="cv" style="left:1855.2px;top:752.8px"></i>
<span class="ra" style="left:1877.6px;top:745.2px;font-size:18.4px">A<b style="font-size:10.4px;vertical-align:8px;color:#3b83d6">^</b></span>
<span class="ra" style="left:1910.4px;top:747.2px;font-size:16px">A<b style="font-size:10.4px;vertical-align:6.4px;color:#3b83d6">v</b></span>
<i style="left:1670.4px;top:784px;width:25.6px;height:28px;background:#e6e6e6;border:2px solid #8a8a8a;border-radius:3.2px"></i>
<span class="ra" style="left:1677.2px;top:785.6px;font-weight:700;font-size:18.4px">B</span>
<span class="ra" style="left:1712px;top:785.6px;font-style:italic;font-size:18.4px;font-family:'Liberation Serif',serif">I</span>
<span class="ra" style="left:1739.2px;top:785.6px;text-decoration:underline;font-size:17.6px">U</span>
<i class="cv" style="left:1765.6px;top:793.2px"></i>
<i class="sa" style="left:1780.8px;top:785.6px;height:25.6px"></i>
<svg class="ic" style="left:1787.2px;top:787.2px" width="21.6" height="21.6" viewBox="0 0 5.4 5.4"><path d="M.5 .5h4.4v4.4H.5zM2.7 .5v4.4M.5 2.7h4.4" fill="none" stroke="#555" stroke-width=".5"/></svg>
<i class="cv" style="left:1815.2px;top:793.2px"></i>
<i class="sa" style="left:1830.4px;top:785.6px;height:25.6px"></i>
<svg class="ic" style="left:1838.4px;top:784.8px" width="24" height="26.4" viewBox="0 0 6 6.6"><path d="M2.8 .6L.9 2.8l1.9 1.7 2-2.1z" fill="#fff" stroke="#555" stroke-width=".5"/><rect x=".4" y="5" width="5.2" height="1.5" fill="#ffe600"/></svg>
<i class="cv" style="left:1868px;top:793.2px"></i>
<span class="ra" style="left:1892px;top:783.6px;font-size:18.4px">A</span>
<i style="left:1888.8px;top:805.6px;width:19.2px;height:5.6px;background:#e8353b"></i>
<i class="cv" style="left:1916.8px;top:793.2px"></i>
<span class="la" style="left:1748px;width:80px;top:826.4px">Font</span>
<i class="dl" style="left:1926.4px"></i>
<i class="sa" style="left:1941.6px"></i>
<!-- alignment -->
<svg class="ic" style="left:1956px;top:746.4px" width="224" height="68" viewBox="0 0 56 17"><g stroke="#555" stroke-width=".55" fill="none"><path d="M.8 1h4.2M.8 2.6h4.2M.8 4.2h4.2"/><path d="M8.2 1.6h4.2M8.2 3.2h4.2M8.2 4.8h4.2"/><path d="M16.4 2h4.2M16.4 3.6h4.2M16.4 5.2h4.2"/><path d="M.6 10.2h4.4M.6 11.8h3M.6 13.4h4.4M.6 15h3"/><path d="M8 10.2h4.4M8.7 11.8h3M8 13.4h4.4M8.7 15h3"/><path d="M15.8 10.2h4.4M17.2 11.8h3M15.8 13.4h4.4M17.2 15h3"/></g><rect x="14.6" y="-.2" width="7.6" height="7" fill="none" stroke="#8a8a8a" stroke-width=".5" rx=".8"/><rect x="14.9" y=".1" width="7" height="6.4" fill="#e6e6e6" opacity=".0"/><path d="M24.4 5.4l3-3.6M25.4 5.8l3.4-1" stroke="#555" stroke-width=".5"/><text x="24.2" y="4.4" font-size="3.4" fill="#3b83d6" font-family="Liberation Sans">ab</text><path d="M31.2 3l.9 1 .9-1" stroke="#555" stroke-width=".45" fill="none"/><g stroke="#3b83d6" stroke-width=".55" fill="none"><path d="M23.4 10.2h4.2M25 11.8h2.6M25 13.4h2.6M23.4 15h4.2M24.6 11.9l-1 .7 1 .7"/><path d="M31.4 10.2h4.2M33 11.8h2.6M33 13.4h2.6M31.4 15h4.2M31.6 11.9l1 .7-1 .7"/></g><path d="M43 1v4.6M44.8 .8v5M46.4 1.6v3.4" stroke="#3b83d6" stroke-width=".6"/><path d="M42 9.8h5v5.4h-5zM42 12.5h5" stroke="#8a8a8a" stroke-width=".5" fill="none"/><path d="M50 12l.9 1 .9-1" stroke="#999" stroke-width=".45" fill="none"/></svg>
<i class="sa" style="left:2105.6px;top:746.4px;height:64px"></i>
<span class="la" style="left:2009.6px;width:80px;top:826.4px">Alignment</span>
<i class="dl" style="left:2163.2px"></i>
<i class="sa" style="left:2176.8px"></i>
<!-- number -->
<i style="left:2185.6px;top:745.6px;width:176.8px;height:25.6px;background:#fff;border:2px solid #9a9a9a;border-radius:3.2px"></i>
<span class="ra" style="left:2190.4px;top:746.4px">General</span>
<i class="cv" style="left:2349.6px;top:752.8px"></i>
<span class="ra" style="left:2195.2px;top:784.8px;font-size:19.2px">$</span>
<i class="cv" style="left:2220.8px;top:793.2px"></i>
<span class="ra" style="left:2240px;top:784.8px;font-size:19.2px">%</span>
<span class="ra" style="left:2278.4px;top:781.6px;font-size:24px;font-weight:700">,</span>
<svg class="ic" style="left:2302.4px;top:785.6px" width="56" height="25.6" viewBox="0 0 14 6.4"><text x=".2" y="3" font-size="2.8" fill="#555" font-family="Liberation Sans">.0</text><text x="1" y="6" font-size="2.8" fill="#555" font-family="Liberation Sans">.00</text><path d="M.2 4.6h1.6M.8 4l-.7.6.7.6" stroke="#3b83d6" stroke-width=".45" fill="none"/><text x="8.2" y="3" font-size="2.8" fill="#555" font-family="Liberation Sans">.00</text><text x="10" y="6" font-size="2.8" fill="#555" font-family="Liberation Sans">.0</text><path d="M8 4.6h1.8M9.2 4l.7.6-.7.6" stroke="#3b83d6" stroke-width=".45" fill="none"/></svg>
<span class="la" style="left:2224px;width:80px;top:826.4px">Number</span>
<i class="dl" style="left:2357.6px"></i>
<!-- formula bar -->
<i style="left:1540px;top:858px;width:117.6px;height:32px;background:#fff;border-radius:4px"></i>
<span class="ra" style="left:1545.6px;top:862px;font-size:16px;color:#222">A1</span>
<i style="left:1642.4px;top:867.2px;width:8px;height:8px;border-right:2px solid #555;border-bottom:2px solid #555;transform:rotate(45deg)"></i>
<i style="left:1669.2px;top:865.6px;width:2.4px;height:3.2px;background:#777;box-shadow:0 6.8px 0 #777,0 13.6px 0 #777"></i>
<i style="left:1680px;top:858px;width:90.4px;height:32px;background:#fff;border-radius:4px"></i>
<svg class="ic" style="left:1684px;top:860.8px" width="88" height="26.4" viewBox="0 0 22 6.6"><path d="M1.2 1.6l3 3.4M4.2 1.6l-3 3.4M8.4 3.6l1.3 1.5 2.7-3.7" stroke="#c9c7c9" stroke-width=".55" fill="none"/><text x="15" y="5.2" font-family="Liberation Serif" font-style="italic" font-size="5.4" fill="#333">fx</text></svg>
<i style="left:1777.6px;top:858px;width:640px;height:32px;background:#fff;border-radius:4px"></i>
<span class="ra" style="left:1788px;top:862px;font-size:16.6px;color:#111;font-weight:700;letter-spacing:-0.4px">Order ID</span>
<!-- col header strip -->
<i style="left:1534.4px;top:896.8px;width:840px;height:21.6px;background:#f1eff1;border-bottom:2px solid #d6d4d6"></i>
<i style="left:1558.4px;top:896.8px;width:88.8px;height:21.6px;background:#dcdadc;border-bottom:3.2px solid #1e7a45"></i>
<i style="left:1534.4px;top:918.4px;width:24px;height:480px;background:#f1eff1"></i>
<i style="left:1534.4px;top:918.4px;width:24px;height:23.36px;background:#dcdadc;border-right:2.8px solid #1e7a45"></i>
<i style="left:1544px;top:901.6px;width:0;height:0;border-bottom:12px solid #c4c2c4;border-left:12px solid transparent"></i>
</div>
<div class="grid" id="agrid">
<span class="ch" style="left:28.28px;top:259.6px">A</span><span class="ch" style="left:143.88px;top:259.6px">B</span><span class="ch" style="left:253.4px;top:259.6px">C</span><span class="ch" style="left:345.4px;top:259.6px">D</span><span class="ch" style="left:461.8px;top:259.6px">E</span><span class="ch" style="left:578px;top:259.6px">F</span><span class="ch" style="left:679.2px;top:259.6px">G</span><span class="ch" style="left:770.2px;top:259.6px">H</span><i class="band" style="top:281.2px;left:24px;width:742.8px;height:23.56px;background:#5b8fd2"></i><i class="band" style="top:304.56px;left:24px;width:742.8px;height:23.56px;background:#b7cbe8"></i><i class="band" style="top:327.92px;left:24px;width:742.8px;height:23.56px;background:#dce6f3"></i><i class="band" style="top:351.28px;left:24px;width:742.8px;height:23.56px;background:#b7cbe8"></i><i class="band" style="top:374.64px;left:24px;width:742.8px;height:23.56px;background:#dce6f3"></i><i class="band" style="top:398px;left:24px;width:742.8px;height:23.56px;background:#b7cbe8"></i><i class="band" style="top:421.36px;left:24px;width:742.8px;height:23.56px;background:#dce6f3"></i><i class="band" style="top:444.72px;left:24px;width:742.8px;height:23.56px;background:#b7cbe8"></i><i class="band" style="top:468.08px;left:24px;width:742.8px;height:23.56px;background:#dce6f3"></i><i class="band" style="top:491.44px;left:24px;width:742.8px;height:23.56px;background:#b7cbe8"></i><i class="band" style="top:514.8px;left:24px;width:742.8px;height:23.56px;background:#dce6f3"></i><i class="band" style="top:538.16px;left:24px;width:742.8px;height:23.56px;background:#b7cbe8"></i><i class="band" style="top:561.52px;left:24px;width:742.8px;height:23.56px;background:#dce6f3"></i><i class="band" style="top:584.88px;left:24px;width:742.8px;height:23.56px;background:#b7cbe8"></i><i class="band" style="top:608.24px;left:24px;width:742.8px;height:23.56px;background:#dce6f3"></i><i class="band" style="top:631.6px;left:24px;width:742.8px;height:23.56px;background:#b7cbe8"></i><i class="band" style="top:654.96px;left:24px;width:742.8px;height:23.56px;background:#dce6f3"></i><i class="band" style="top:678.32px;left:24px;width:742.8px;height:23.56px;background:#b7cbe8"></i><i class="band" style="top:701.68px;left:24px;width:742.8px;height:23.56px;background:#dce6f3"></i><i class="band" style="top:725.04px;left:24px;width:742.8px;height:23.56px;background:#b7cbe8"></i><i class="band" style="top:748.4px;left:24px;width:742.8px;height:23.56px;background:#dce6f3"></i><i class="vl" style="left:24px;top:256.8px;height:494px"></i><i class="vl" style="left:112.6px;top:256.8px;height:494px"></i><i class="vl" style="left:255.2px;top:256.8px;height:494px"></i><i class="vl" style="left:331.6px;top:256.8px;height:494px"></i><i class="vl" style="left:439.2px;top:256.8px;height:494px"></i><i class="vl" style="left:564.4px;top:256.8px;height:494px"></i><i class="vl" style="left:671.6px;top:256.8px;height:494px"></i><i class="vl" style="left:766.8px;top:256.8px;height:494px"></i><i class="vl" style="left:853.6px;top:256.8px;height:494px"></i><i class="hl" style="top:281.2px"></i><i class="hl" style="top:304.56px"></i><i class="hl" style="top:327.92px"></i><i class="hl" style="top:351.28px"></i><i class="hl" style="top:374.64px"></i><i class="hl" style="top:398px"></i><i class="hl" style="top:421.36px"></i><i class="hl" style="top:444.72px"></i><i class="hl" style="top:468.08px"></i><i class="hl" style="top:491.44px"></i><i class="hl" style="top:514.8px"></i><i class="hl" style="top:538.16px"></i><i class="hl" style="top:561.52px"></i><i class="hl" style="top:584.88px"></i><i class="hl" style="top:608.24px"></i><i class="hl" style="top:631.6px"></i><i class="hl" style="top:654.96px"></i><i class="hl" style="top:678.32px"></i><i class="hl" style="top:701.68px"></i><i class="hl" style="top:725.04px"></i><i class="hl" style="top:748.4px"></i><i class="hl" style="top:771.76px"></i><span class="rn" style="top:281.2px">1</span><i class="fb" style="left:93px;top:285.6px"><i class="fa"></i></i><span class="c h" style="left:24.4px;top:281.2px;width:73.76px;"><b class="hp">Order ID</b></span><i class="fb" style="left:235.6px;top:285.6px"><i class="fa"></i></i><span class="c h" style="left:113px;top:281.2px;width:131.84px;"><b class="hp">Customer Name</b></span><i class="fb" style="left:312px;top:285.6px"><i class="fa"></i></i><span class="c h" style="left:255.6px;top:281.2px;width:60.64px;"><b class="hp">Region</b></span><i class="fb" style="left:419.6px;top:285.6px"><i class="fa"></i></i><span class="c h" style="left:332px;top:281.2px;width:94.2px;"><b class="hp">Order Date</b></span><i class="fb" style="left:544.8px;top:285.6px"><i class="fa"></i></i><span class="c h" style="left:439.6px;top:281.2px;width:113.12px;"><b class="hp">Sales Amount</b></span><i class="fb" style="left:652px;top:285.6px"><i class="fa"></i></i><span class="c h" style="left:564.8px;top:281.2px;width:93.76px;"><b class="hp">Discount %</b></span><i class="fb" style="left:747.2px;top:285.6px"><i class="fa"></i></i><span class="c h" style="left:672px;top:281.2px;width:80.88px;"><b class="hp">Sales Rep</b></span><span class="rn" style="top:304.56px">2</span><span class="c" style="left:24.4px;top:304.56px;width:92.68px;">ORD-1075</span><span class="c" style="left:113px;top:304.56px;width:150.76px;">Gamma Inc</span><span class="c" style="left:255.6px;top:304.56px;width:79.56px;">west</span><span class="c" style="left:332px;top:304.56px;width:113.12px;">05/07/2021</span><i class="tri" style="left:441.2px;top:305.36px"></i><span class="c" style="left:439.6px;top:304.56px;width:132.04px;">3107</span><span class="c r" style="left:556.64px;width:110.96px;top:304.56px;">5</span><span class="c" style="left:672px;top:304.56px;width:99.8px;">Usman</span><span class="rn" style="top:327.92px">3</span><span class="c" style="left:24.4px;top:327.92px;width:92.68px;">ORD-1089</span><span class="c" style="left:113px;top:327.92px;width:150.76px;">Delta Co</span><span class="c" style="left:255.6px;top:327.92px;width:79.56px;">East</span><span class="c" style="left:332px;top:327.92px;width:113.12px;">10/01/2021</span><i class="tri" style="left:441.2px;top:328.72px"></i><span class="c" style="left:439.6px;top:327.92px;width:132.04px;">1,481</span><span class="c" style="left:672px;top:327.92px;width:99.8px;">Fatima</span><span class="rn" style="top:351.28px">4</span><span class="c" style="left:24.4px;top:351.28px;width:92.68px;">ORD-1030</span><span class="c" style="left:113px;top:351.28px;width:150.76px;">Epsilon Ltd</span><span class="c" style="left:255.6px;top:351.28px;width:79.56px;">SOUTH</span><span class="c" style="left:332px;top:351.28px;width:113.12px;">2023.07.11</span><i class="tri" style="left:441.2px;top:352.08px"></i><span class="c" style="left:439.6px;top:351.28px;width:132.04px;">3295</span><span class="c" style="left:672px;top:351.28px;width:99.8px;">Usman</span><span class="rn" style="top:374.64px">5</span><span class="c" style="left:24.4px;top:374.64px;width:92.68px;">ORD-1064</span><span class="c" style="left:113px;top:374.64px;width:150.76px;">Epsilon Ltd</span><span class="c" style="left:255.6px;top:374.64px;width:79.56px;">North</span><span class="c" style="left:332px;top:374.64px;width:113.12px;">2023.08.11</span><i class="tri" style="left:441.2px;top:375.44px"></i><span class="c" style="left:439.6px;top:374.64px;width:132.04px;">2922</span><span class="c r" style="left:556.64px;width:110.96px;top:374.64px;">10</span><span class="c" style="left:672px;top:374.64px;width:99.8px;">Fatima</span><span class="rn" style="top:398px">6</span><span class="c" style="left:24.4px;top:398px;width:92.68px;">ORD-1482</span><span class="c" style="left:113px;top:398px;width:150.76px;">Gamma Inc</span><span class="c" style="left:255.6px;top:398px;width:79.56px;">SOUTH</span><span class="c" style="left:332px;top:398px;width:113.12px;">2023.06.20</span><i class="tri" style="left:441.2px;top:398.8px"></i><span class="c" style="left:439.6px;top:398px;width:132.04px;">5,401</span><span class="c r" style="left:556.64px;width:110.96px;top:398px;">0</span><span class="c" style="left:672px;top:398px;width:99.8px;">Ali</span><span class="rn" style="top:421.36px">7</span><span class="c" style="left:24.4px;top:421.36px;width:92.68px;">ORD-1465</span><span class="c" style="left:113px;top:421.36px;width:150.76px;">Epsilon Ltd</span><span class="c" style="left:255.6px;top:421.36px;width:79.56px;">SOUTH</span><span class="c" style="left:332px;top:421.36px;width:113.12px;">04-24-2023</span><i class="tri" style="left:441.2px;top:422.16px"></i><span class="c" style="left:439.6px;top:421.36px;width:132.04px;">3,727</span><span class="c" style="left:672px;top:421.36px;width:99.8px;">Fatima</span><span class="rn" style="top:444.72px">8</span><span class="c" style="left:24.4px;top:444.72px;width:92.68px;">ORD-1195</span><span class="c" style="left:113px;top:444.72px;width:150.76px;">Delta Co</span><span class="c" style="left:255.6px;top:444.72px;width:79.56px;">SOUTH</span><span class="c" style="left:332px;top:444.72px;width:113.12px;">19/03/2021</span><i class="tri" style="left:441.2px;top:445.52px"></i><span class="c" style="left:439.6px;top:444.72px;width:132.04px;">3,641</span><span class="c r" style="left:556.64px;width:110.96px;top:444.72px;">0</span><span class="c" style="left:672px;top:444.72px;width:99.8px;">Sara</span><span class="rn" style="top:468.08px">9</span><span class="c" style="left:24.4px;top:468.08px;width:92.68px;">ORD-1029</span><span class="c" style="left:113px;top:468.08px;width:150.76px;">Epsilon Ltd</span><span class="c" style="left:255.6px;top:468.08px;width:79.56px;">North</span><span class="c" style="left:332px;top:468.08px;width:113.12px;">08-01-2023</span><i class="tri" style="left:441.2px;top:468.88px"></i><span class="c" style="left:439.6px;top:468.08px;width:132.04px;">3807</span><span class="c" style="left:672px;top:468.08px;width:99.8px;">Fatima</span><span class="rn" style="top:491.44px">10</span><span class="c" style="left:24.4px;top:491.44px;width:92.68px;">ORD-1040</span><span class="c" style="left:113px;top:491.44px;width:150.76px;">Alpha Corp</span><span class="c" style="left:255.6px;top:491.44px;width:79.56px;">North</span><span class="c" style="left:332px;top:491.44px;width:113.12px;">25/09/2022</span><i class="tri" style="left:441.2px;top:492.24px"></i><span class="c" style="left:439.6px;top:491.44px;width:132.04px;">5,501</span><span class="c r" style="left:556.64px;width:110.96px;top:491.44px;">0</span><span class="c" style="left:672px;top:491.44px;width:99.8px;">Usman</span><span class="rn" style="top:514.8px">11</span><span class="c" style="left:24.4px;top:514.8px;width:92.68px;">ORD-1351</span><span class="c" style="left:113px;top:514.8px;width:150.76px;">Delta Co</span><span class="c" style="left:255.6px;top:514.8px;width:79.56px;">west</span><span class="c" style="left:332px;top:514.8px;width:113.12px;">2023.12.08</span><i class="tri" style="left:441.2px;top:515.6px"></i><span class="c" style="left:439.6px;top:514.8px;width:132.04px;">3615</span><span class="c r" style="left:556.64px;width:110.96px;top:514.8px;">10</span><span class="c" style="left:672px;top:514.8px;width:99.8px;">Fatima</span><span class="rn" style="top:538.16px">12</span><span class="c" style="left:24.4px;top:538.16px;width:92.68px;">ORD-1312</span><span class="c" style="left:113px;top:538.16px;width:150.76px;">Gamma Inc</span><span class="c" style="left:255.6px;top:538.16px;width:79.56px;">East</span><span class="c" style="left:332px;top:538.16px;width:113.12px;">17/04/2023</span><i class="tri" style="left:441.2px;top:538.96px"></i><span class="c" style="left:439.6px;top:538.16px;width:132.04px;">3635</span><span class="c r" style="left:556.64px;width:110.96px;top:538.16px;">10</span><span class="c" style="left:672px;top:538.16px;width:99.8px;">John</span><span class="rn" style="top:561.52px">13</span><span class="c" style="left:24.4px;top:561.52px;width:92.68px;">ORD-1958</span><span class="c" style="left:113px;top:561.52px;width:150.76px;">Epsilon Ltd</span><span class="c" style="left:255.6px;top:561.52px;width:79.56px;">north</span><span class="c" style="left:332px;top:561.52px;width:113.12px;">2023.11.21</span><i class="tri" style="left:441.2px;top:562.32px"></i><span class="c" style="left:439.6px;top:561.52px;width:132.04px;">1,907</span><span class="c r" style="left:556.64px;width:110.96px;top:561.52px;">15</span><span class="c" style="left:672px;top:561.52px;width:99.8px;">Fatima</span><span class="rn" style="top:584.88px">14</span><span class="c" style="left:24.4px;top:584.88px;width:92.68px;">ORD-1106</span><span class="c" style="left:113px;top:584.88px;width:150.76px;">Delta Co</span><span class="c" style="left:255.6px;top:584.88px;width:79.56px;">SOUTH</span><span class="c" style="left:332px;top:584.88px;width:113.12px;">28/10/2021</span><i class="tri" style="left:441.2px;top:585.68px"></i><span class="c" style="left:439.6px;top:584.88px;width:132.04px;">1,572</span><span class="c r" style="left:556.64px;width:110.96px;top:584.88px;">0</span><span class="c" style="left:672px;top:584.88px;width:99.8px;">John</span><span class="rn" style="top:608.24px">15</span><span class="c" style="left:24.4px;top:608.24px;width:92.68px;">ORD-1152</span><span class="c" style="left:113px;top:608.24px;width:150.76px;">Gamma Inc</span><span class="c" style="left:255.6px;top:608.24px;width:79.56px;">East</span><span class="c" style="left:332px;top:608.24px;width:113.12px;">2023.07.11</span><i class="tri" style="left:441.2px;top:609.04px"></i><span class="c" style="left:439.6px;top:608.24px;width:132.04px;">1,258</span><span class="c r" style="left:556.64px;width:110.96px;top:608.24px;">15</span><span class="c" style="left:672px;top:608.24px;width:99.8px;">Usman</span><span class="rn" style="top:631.6px">16</span><span class="c" style="left:24.4px;top:631.6px;width:92.68px;">ORD-1171</span><span class="c" style="left:113px;top:631.6px;width:150.76px;">Beta LLC</span><span class="c" style="left:255.6px;top:631.6px;width:79.56px;">East</span><span class="c" style="left:332px;top:631.6px;width:113.12px;">12-10-2022</span><i class="tri" style="left:441.2px;top:632.4px"></i><span class="c" style="left:439.6px;top:631.6px;width:132.04px;">1265</span><span class="c r" style="left:556.64px;width:110.96px;top:631.6px;">5</span><span class="c" style="left:672px;top:631.6px;width:99.8px;">Ali</span><span class="rn" style="top:654.96px">17</span><span class="c" style="left:24.4px;top:654.96px;width:92.68px;">ORD-1220</span><span class="c" style="left:113px;top:654.96px;width:150.76px;">Alpha Corp</span><span class="c" style="left:255.6px;top:654.96px;width:79.56px;">north</span><span class="c" style="left:332px;top:654.96px;width:113.12px;">2023.03.20</span><i class="tri" style="left:441.2px;top:655.76px"></i><span class="c" style="left:439.6px;top:654.96px;width:132.04px;">50,5</span><span class="c r" style="left:556.64px;width:110.96px;top:654.96px;">10</span><span class="c" style="left:672px;top:654.96px;width:99.8px;">Sara</span><span class="rn" style="top:678.32px">18</span><span class="c" style="left:24.4px;top:678.32px;width:92.68px;">ORD-1462</span><span class="c" style="left:113px;top:678.32px;width:150.76px;">Beta LLC</span><span class="c" style="left:255.6px;top:678.32px;width:79.56px;">north</span><span class="c" style="left:332px;top:678.32px;width:113.12px;">2023.08.21</span><i class="tri" style="left:441.2px;top:679.12px"></i><span class="c" style="left:439.6px;top:678.32px;width:132.04px;">3501</span><span class="c r" style="left:556.64px;width:110.96px;top:678.32px;">0</span><span class="c" style="left:672px;top:678.32px;width:99.8px;">John</span><span class="rn" style="top:701.68px">19</span><span class="c" style="left:24.4px;top:701.68px;width:92.68px;">ORD-1931</span><span class="c" style="left:113px;top:701.68px;width:150.76px;">Gamma Inc</span><span class="c" style="left:255.6px;top:701.68px;width:79.56px;">SOUTH</span><span class="c" style="left:332px;top:701.68px;width:113.12px;">12-06-2022</span><i class="tri" style="left:441.2px;top:702.48px"></i><span class="c" style="left:439.6px;top:701.68px;width:132.04px;">1894</span><span class="c r" style="left:556.64px;width:110.96px;top:701.68px;">15</span><span class="c" style="left:672px;top:701.68px;width:99.8px;">Sara</span><span class="rn" style="top:725.04px">20</span><span class="c" style="left:24.4px;top:725.04px;width:92.68px;">ORD-1889</span><span class="c" style="left:113px;top:725.04px;width:150.76px;">Epsilon Ltd</span><span class="c" style="left:255.6px;top:725.04px;width:79.56px;">East</span><span class="c" style="left:332px;top:725.04px;width:113.12px;">2023.09.08</span><i class="tri" style="left:441.2px;top:725.84px"></i><span class="c" style="left:439.6px;top:725.04px;width:132.04px;">5,118</span><span class="c r" style="left:556.64px;width:110.96px;top:725.04px;">15</span><span class="c" style="left:672px;top:725.04px;width:99.8px;">Usman</span><span class="rn" style="top:748.4px">21</span><span class="c" style="left:24.4px;top:748.4px;width:92.68px;">ORD-1517</span><span class="c" style="left:113px;top:748.4px;width:150.76px;">Delta Co</span><span class="c" style="left:255.6px;top:748.4px;width:79.56px;">North</span><span class="c" style="left:332px;top:748.4px;width:113.12px;">2023.05.02</span><i class="tri" style="left:441.2px;top:749.2px"></i><span class="c" style="left:439.6px;top:748.4px;width:132.04px;">2,240</span><span class="c r" style="left:556.64px;width:110.96px;top:748.4px;">5</span><span class="c" style="left:672px;top:748.4px;width:99.8px;">Ali</span></div>
<div class="abs" style="left:-1534.4px;top:-637.2px">
<!-- selection box on A1 -->
<i style="left:1557.2px;top:917.2px;width:91.2px;height:25.6px;border:3.2px solid #1e7a45"></i>
<i style="left:1645.2px;top:939.6px;width:5.6px;height:5.6px;background:#1e7a45;border:1.2px solid #fff"></i>
<i style="left:1534.4px;top:1388.8px;width:840px;height:52px;background:#efedef"></i>
<i style="left:1534.4px;top:1388.8px;width:840px;height:2px;background:#d0ced0"></i>
<svg class="ic" style="left:1550.4px;top:1396px" width="40" height="16" viewBox="0 0 10 4"><path d="M2.2 .5L.8 2l1.4 1.5M7.4 .5L8.8 2 7.4 3.5" stroke="#cfcdcf" stroke-width=".55" fill="none"/></svg>
<i style="left:1622.4px;top:1389.6px;width:140px;height:26.4px;background:#fff;border-bottom:3.2px solid #1e7a45;border-radius:0 0 4px 4px"></i>
<span style="left:1622.4px;width:140px;text-align:center;top:1391.2px;font-size:16.2px;line-height:24px;color:#1e7a45;font-weight:700;letter-spacing:-0.16px">Raw_Sales_Data</span>
<i style="left:1792.8px;top:1395.2px;width:16px;height:16px;border:2px solid #888;border-radius:50%"></i>
<i style="left:1796.8px;top:1402.2px;width:8px;height:2px;background:#888"></i>
<i style="left:1799.8px;top:1399.2px;width:2px;height:8px;background:#888"></i>
<span style="left:1522.4px;top:1420.8px;font-size:14.4px;line-height:20px;color:#222">Ready</span>
<i style="left:1578.4px;top:1424px;width:12px;height:12.8px;border:2px solid #555;border-radius:1.6px"></i>
<span style="left:1598.4px;top:1420.8px;font-size:14.4px;line-height:20px;color:#222;letter-spacing:-0.48px">Accessibility: Investigate</span>
</div>
</div></div>
<div id="arrow"><svg width="34" height="34" viewBox="0 0 34 34"><path d="M12 17.1H22.2M17.7 12.3L22.5 17.1L17.7 21.9" fill="none" stroke="#fff" stroke-width="1.65" stroke-linecap="round" stroke-linejoin="round"/></svg></div>
<div id="pill"><span>1 prompt</span></div>
<div class="badge" id="bb">Before</div>
<div class="badge" id="ab">After</div>
</div>
</body></html>
